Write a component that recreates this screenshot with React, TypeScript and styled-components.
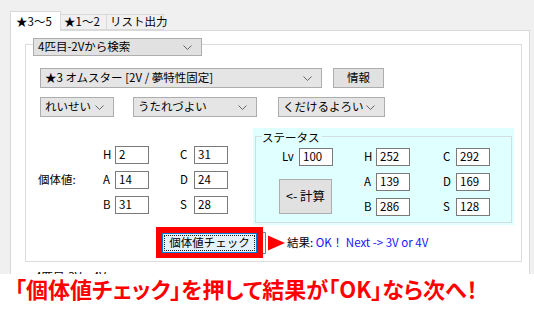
import React from "react";
import styled, {createGlobalStyle} from "styled-components";

const GlobalStyle = createGlobalStyle`
  html, body {
    margin: 0;
    padding: 0;
    background: #fff;
  }

  body {
    font-family: "Noto Sans CJK JP", "Liberation Sans", sans-serif;
    font-size: 11.5px;
    color: #000;
  }

  * {
    box-sizing: border-box;
  }
`;

const Screen = styled.div`
  width: 534px;
  height: 320px;
  overflow: hidden;
  background: #fff;
`;

const Window = styled.div`
  height: 274px;
  background: #f0f0f0;
  padding: 11px 4px 0 10px;
  overflow: hidden;
  display: flex;
  flex-direction: column;
`;

const TabStrip = styled.div`
  display: flex;
  align-items: flex-end;
  height: 19px;
`;

const Tab = styled.div<{ $active?: boolean; $width: number }>`
  position: relative;
  z-index: ${p => p.$active ? 2 : 1};
  width: ${p => p.$width}px;
  height: ${p => p.$active ? 20 : 16}px;
  margin-bottom: ${p => p.$active ? -1 : 0}px;
  margin-left: ${p => p.$active ? 0 : -1}px;
  background: ${p => p.$active ? "#fff" : "#f0f0f0"};
  border: 1px solid #d9d9d9;
  border-bottom: ${p => p.$active ? "none" : "1px solid #d9d9d9"};
  display: flex;
  align-items: center;
  padding-left: ${p => p.$active ? 5 : 3}px;
  line-height: 1;
  white-space: nowrap;
`;

const TabPage = styled.div`
  flex: 1;
  background: #fff;
  border: 1px solid #d9d9d9;
  display: flex;
  flex-direction: column;
`;

const GroupBox = styled.div`
  position: relative;
  flex-shrink: 0;
  height: 218px;
  margin: 13px 7px 0 14px;
  border: 1px solid #dcdcdc;
  padding: 23px 0 0 14px;
  display: flex;
  flex-direction: column;
`;

const Combo = styled.div<{ $width: number }>`
  width: ${p => p.$width}px;
  height: 20px;
  background: #e5e5e5;
  border: 1px solid #adadad;
  display: flex;
  align-items: center;
  justify-content: space-between;
  padding: 0 9px 0 4px;
  line-height: 1;
  white-space: nowrap;
`;

const HeaderCombo = styled(Combo)`
  position: absolute;
  top: -7px;
  left: 7px;
  height: 18px;
  background: #e1e1e1;
`;

const Button = styled.div<{ $width: number; $height?: number }>`
  width: ${p => p.$width}px;
  height: ${p => p.$height ?? 20}px;
  background: #e1e1e1;
  border: 1px solid #adadad;
  display: flex;
  align-items: center;
  justify-content: center;
  line-height: 1;
  white-space: nowrap;
`;

const Row = styled.div<{ $gap: number; $top?: number }>`
  display: flex;
  gap: ${p => p.$gap}px;
  margin-top: ${p => p.$top ?? 0}px;
`;

const Spread = styled.div`
  display: flex;
  margin-top: 11px;
`;

const IvArea = styled.div`
  width: 215px;
  margin-left: -2px;
  padding-top: 18px;
  display: grid;
  grid-template-columns: 65px 12px 34px 31px 14px 34px;
  grid-template-rows: 18px 18px 18px;
  row-gap: 7px;
  align-content: start;
`;

const Label = styled.div<{ $row?: number }>`
  display: flex;
  align-items: center;
  line-height: 1;
  white-space: nowrap;
  grid-row: ${p => p.$row ?? "auto"};
`;

const Field = styled.div`
  height: 18px;
  background: #fff;
  border: 1px solid #7a7a7a;
  display: flex;
  align-items: center;
  padding-left: 3px;
  line-height: 1;
`;

const StatusBox = styled.div`
  position: relative;
  width: 261px;
  height: 97px;
  background: #e0ffff;
  padding: 1px 0 0 9px;

  &::before {
    content: "";
    position: absolute;
    top: 8px;
    left: 2px;
    right: 2px;
    bottom: 2px;
    border: 1px solid #d3dde2;
  }
`;

const Legend = styled.div`
  position: relative;
  display: inline-block;
  background: #e0ffff;
  padding-right: 2px;
  line-height: 14px;
`;

const StatusGrid = styled.div`
  margin: 3px 0 0 17px;
  display: grid;
  grid-template-columns: 20px 34px 31px 12px 34px 33px 13px 34px;
  grid-template-rows: 18px 18px 18px;
  row-gap: 7px;
`;

const CalcButton = styled(Button)`
  grid-column: 1 / 3;
  grid-row: 2 / 4;
  align-self: center;
  margin-top: 4px;
  font-size: 12.5px;
`;

const CheckRow = styled.div`
  display: flex;
  align-items: center;
  margin: 2px 0 0 116px;
`;

const Highlight = styled.div`
  border: 6px solid #ff0000;
  border-bottom-width: 5px;
`;

const CheckButton = styled.div`
  width: 95px;
  height: 20px;
  background: #e5f1fb;
  border: 1px solid #0078d7;
  outline: 1px dotted #222;
  outline-offset: -3px;
  display: flex;
  align-items: center;
  justify-content: center;
  line-height: 1;
`;

const Result = styled.div`
  line-height: 1;
  white-space: nowrap;
`;

const Blue = styled.span`
  color: #1414ff;
`;

// only the top of this label shows before the screenshot is cut off
const NextLabel = styled.div`
  flex-shrink: 0;
  height: 5px;
  overflow: hidden;
  margin: 7px 0 0 24px;
  line-height: 15px;
`;

const Caption = styled.div`
  padding: 3px 0 0 15px;
  color: #ff0000;
  font-weight: 700;
  font-size: 22px;
  line-height: 1;
  font-feature-settings: "palt";
  white-space: nowrap;
`;

const Chevron = () => (
	<svg width="9" height="5" viewBox="0 0 9 5">
		<path d="M0.5 0.5 L4.5 4.5 L8.5 0.5" stroke="#666" fill="none"/>
	</svg>
);

const Arrow = () => (
	<svg width="24" height="24" viewBox="0 0 24 24">
		<path d="M0 1.5 H2.5 V22.5 H0" stroke="#3c8be0" fill="none"/>
		<path d="M5 4.5 L22 12 L5 19.5 Z" fill="#ff0000"/>
	</svg>
);

const ivs = [["H", "2", "C", "31"], ["A", "14", "D", "24"], ["B", "31", "S", "28"]];
const stats = [["H", "252", "C", "292"], ["A", "139", "D", "169"], ["B", "286", "S", "128"]];

const App = () => {
	return (
		<Screen>
			<GlobalStyle/>
			<Window>
				<TabStrip>
					<Tab $active $width={51}>★3〜5</Tab>
					<Tab $width={47}>★1〜2</Tab>
					<Tab $width={58}>リスト出力</Tab>
				</TabStrip>
				<TabPage>
					<GroupBox>
						<HeaderCombo $width={169}>4匹目-2Vから検索<Chevron/></HeaderCombo>

						<Row $gap={11}>
							<Combo $width={282}>★3 オムスター [2V / 夢特性固定]<Chevron/></Combo>
							<Button $width={51}>情報</Button>
						</Row>

						<Row $gap={0} $top={9}>
							<Combo $width={74}>れいせい<Chevron/></Combo>
							<Combo $width={124} style={{marginLeft: 19}}>うたれづよい<Chevron/></Combo>
							<Combo $width={107} style={{marginLeft: 21}}>くだけるよろい<Chevron/></Combo>
						</Row>

						<Spread>
							<IvArea>
								<Label $row={2} style={{gridColumn: 1}}>個体値:</Label>
								{ivs.map(([a, av, b, bv], i) => (
									<React.Fragment key={a}>
										<Label style={{gridColumn: 2, gridRow: i + 1}}>{a}</Label>
										<Field style={{gridColumn: 3, gridRow: i + 1}}>{av}</Field>
										<Label style={{gridColumn: 5, gridRow: i + 1}}>{b}</Label>
										<Field style={{gridColumn: 6, gridRow: i + 1}}>{bv}</Field>
									</React.Fragment>
								))}
							</IvArea>

							<StatusBox>
								<Legend>ステータス</Legend>
								<StatusGrid>
									<Label style={{gridColumn: 1, gridRow: 1, paddingLeft: 3}}>Lv</Label>
									<Field style={{gridColumn: 2, gridRow: 1}}>100</Field>
									<CalcButton $width={53} $height={35}>&lt;- 計算</CalcButton>
									{stats.map(([a, av, b, bv], i) => (
										<React.Fragment key={a}>
											<Label style={{gridColumn: 4, gridRow: i + 1}}>{a}</Label>
											<Field style={{gridColumn: 5, gridRow: i + 1}}>{av}</Field>
											<Label style={{gridColumn: 7, gridRow: i + 1}}>{b}</Label>
											<Field style={{gridColumn: 8, gridRow: i + 1}}>{bv}</Field>
										</React.Fragment>
									))}
								</StatusGrid>
							</StatusBox>
						</Spread>

						<CheckRow>
							<Highlight>
								<CheckButton>個体値チェック</CheckButton>
							</Highlight>
							<Arrow/>
							<Result>結果: <Blue>OK！ Next -&gt; 3V or 4V</Blue></Result>
						</CheckRow>
					</GroupBox>
					<NextLabel>4匹目-3V～4V</NextLabel>
				</TabPage>
			</Window>
			<Caption>「個体値チェック」を押して結果が「OK」なら次へ！</Caption>
		</Screen>
	);
};

export default App;
